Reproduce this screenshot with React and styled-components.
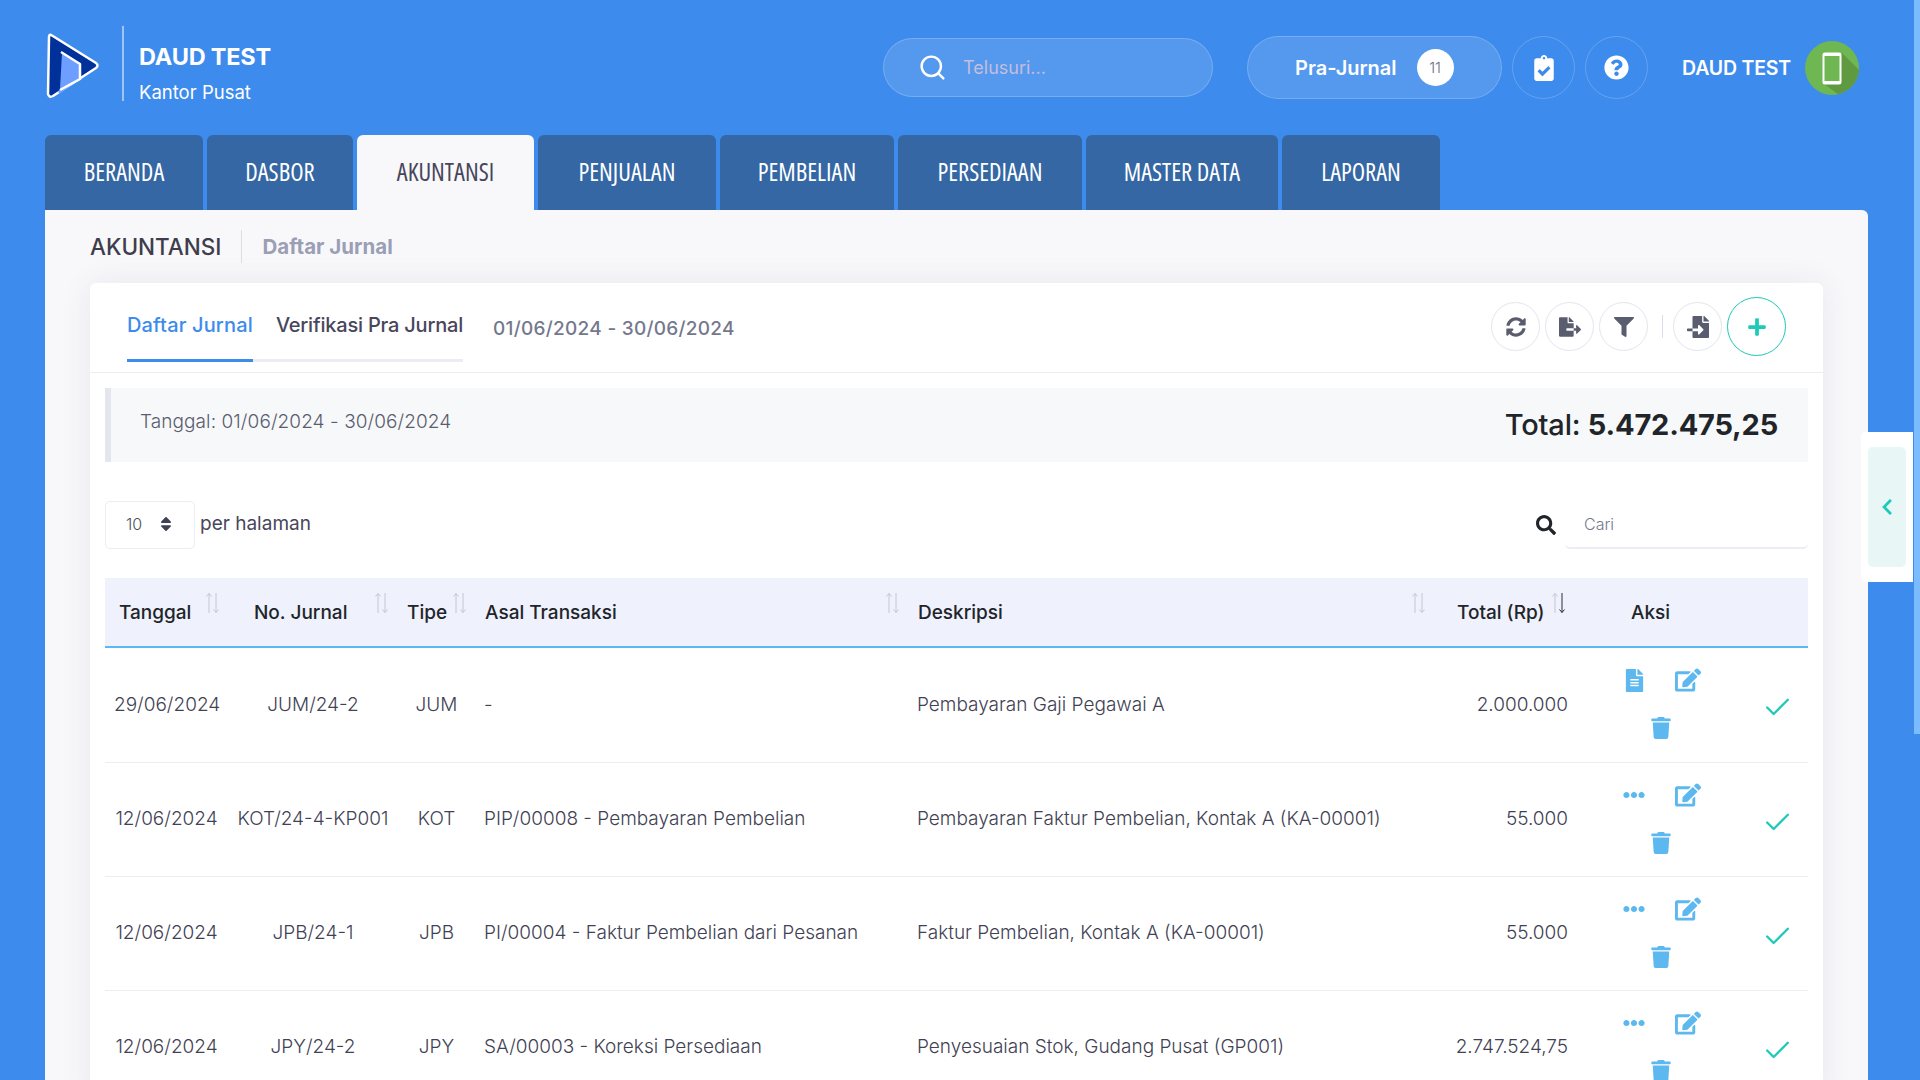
import React from "react";
import styled, { createGlobalStyle } from "styled-components";
import {
  FaSyncAlt,
  FaFileExport,
  FaFilter,
  FaFileImport,
  FaPlus,
  FaSearch,
  FaFileAlt,
  FaEdit,
  FaTrash,
  FaEllipsisH,
  FaChevronLeft,
  FaClipboardCheck,
  FaQuestionCircle,
  FaSort,
} from "react-icons/fa";
import { Search, Check } from "lucide-react";

const NAV = [
  { label: "BERANDA", width: 158 },
  { label: "DASBOR", width: 146 },
  { label: "AKUNTANSI", width: 177, active: true },
  { label: "PENJUALAN", width: 178 },
  { label: "PEMBELIAN", width: 174 },
  { label: "PERSEDIAAN", width: 184 },
  { label: "MASTER DATA", width: 192 },
  { label: "LAPORAN", width: 158 },
];

const COLUMNS = [
  { label: "Tanggal", width: 123, pad: 14, sort: 100, align: "center" },
  { label: "No. Jurnal", width: 170, pad: 26, sort: 146, align: "center" },
  { label: "Tipe", width: 77, pad: 9, sort: 54, align: "center" },
  { label: "Asal Transaksi", width: 433, pad: 10, sort: 410, align: "left" },
  { label: "Deskripsi", width: 537, pad: 10, sort: 503, align: "left" },
  { label: "Total (Rp)", width: 132, pad: 12, sort: 106, align: "right", sorted: true },
  { label: "Aksi", width: 231, pad: 54 },
];

const ROWS = [
  ["29/06/2024", "JUM/24-2", "JUM", "-", "Pembayaran Gaji Pegawai A", "2.000.000"],
  ["12/06/2024", "KOT/24-4-KP001", "KOT", "PIP/00008 - Pembayaran Pembelian", "Pembayaran Faktur Pembelian, Kontak A (KA-00001)", "55.000"],
  ["12/06/2024", "JPB/24-1", "JPB", "PI/00004 - Faktur Pembelian dari Pesanan", "Faktur Pembelian, Kontak A (KA-00001)", "55.000"],
  ["12/06/2024", "JPY/24-2", "JPY", "SA/00003 - Koreksi Persediaan", "Penyesuaian Stok, Gudang Pusat (GP001)", "2.747.524,75"],
];

const GlobalStyle = createGlobalStyle`
  html, body {
    margin: 0;
    height: 100%;
    overflow: hidden;
    background: #3d8bec;
    font-family: "Inter", "Noto Sans", sans-serif;
  }
`;

const Page = styled.div`
  height: 1080px;
  overflow: hidden;
  padding: 0 52px 0 45px;
  box-sizing: border-box;
`;

const Header = styled.header`
  display: flex;
  align-items: center;
  height: 135px;
  padding: 0 9px 0 1px;
`;

const LogoMark = styled.svg`
  margin-top: -3px;
`;

const Divider = styled.div`
  width: 2px;
  height: 75px;
  margin: -8px 0 0 22px;
  background: rgba(255, 255, 255, 0.5);
`;

const Brand = styled.div`
  margin: 12px 0 0 15px;
  color: #fff;
`;

const BrandName = styled.div`
  font-size: 23.500px;
  font-weight: 700;
  line-height: 26px;
  letter-spacing: -0.2px;
`;

const BrandOffice = styled.div`
  margin-top: 11px;
  font-size: 18.500px;
  line-height: 22px;
`;

const SearchPill = styled.div`
  display: flex;
  align-items: center;
  box-sizing: border-box;
  width: 330px;
  height: 59px;
  margin-left: auto;
  padding-left: 34px;
  border: 1px solid rgba(255, 255, 255, 0.2);
  border-radius: 30px;
  background: rgba(255, 255, 255, 0.12);
  color: #fff;
`;

const Placeholder = styled.span`
  margin-left: 16px;
  font-size: 18px;
  color: #c3bedd;
`;

const PraJurnal = styled.div`
  display: flex;
  align-items: center;
  box-sizing: border-box;
  width: 255px;
  height: 63px;
  margin-left: 34px;
  padding-left: 47px;
  border: 1px solid rgba(255, 255, 255, 0.2);
  border-radius: 32px;
  background: rgba(255, 255, 255, 0.12);
  color: #fff;
  font-size: 20px;
  font-weight: 600;
`;

const Badge = styled.span`
  display: flex;
  align-items: center;
  justify-content: center;
  width: 37px;
  height: 37px;
  margin-left: 20px;
  border-radius: 50%;
  background: #fff;
  color: #6c6e80;
  font-size: 15px;
  font-weight: 300;
`;

const HeaderIcon = styled.div`
  display: flex;
  align-items: center;
  justify-content: center;
  box-sizing: border-box;
  width: 63px;
  height: 63px;
  margin-left: 10px;
  border: 1px solid rgba(255, 255, 255, 0.2);
  border-radius: 50%;
  color: #fff;
`;

const UserName = styled.span`
  margin: 0 14px 0 34px;
  color: #fff;
  font-size: 19.500px;
  font-weight: 600;
  letter-spacing: -0.2px;
`;

const NavTabs = styled.nav`
  display: flex;
  gap: 4px;
  height: 75px;
`;

const NavTab = styled.div`
  display: flex;
  align-items: center;
  justify-content: center;
  box-sizing: border-box;
  width: ${(p) => p.$width}px;
  padding-bottom: 2px;
  border-radius: 6px 6px 0 0;
  background: ${(p) => (p.$active ? "#f8f8fb" : "#3467a3")};
  color: ${(p) => (p.$active ? "#48465b" : "#fff")};
  font-family: "Open Sans", "Noto Sans", sans-serif;
  font-stretch: 75%;
  font-size: 24.500px;
  font-weight: 500;
`;

const Panel = styled.main`
  padding: 0 45px;
  border-radius: 0 6px 0 0;
  background: #f8f8fb;
`;

const Breadcrumb = styled.div`
  display: flex;
  align-items: center;
  height: 73px;
`;

const CrumbTitle = styled.div`
  padding-right: 20px;
  border-right: 1px solid #dcdde6;
  color: #3f3d4b;
  font-size: 22.500px;
  font-weight: 500;
  line-height: 33px;
`;

const CrumbLink = styled.div`
  margin-left: 20px;
  color: #9a9fb5;
  font-size: 20.500px;
  font-weight: 700;
`;

const Card = styled.section`
  border-radius: 6px 6px 0 0;
  background: #fff;
  box-shadow: 0 0 30px rgba(82, 63, 105, 0.09);
`;

const CardHeader = styled.div`
  display: flex;
  align-items: flex-start;
  height: 89px;
  padding: 0 37px;
  border-bottom: 1px solid #ebedf2;
`;

const CardTab = styled.div`
  box-sizing: border-box;
  height: 59px;
  margin-top: 20px;
  padding: 10px 0 0 ${(p) => p.$indent || 0}px;
  border-bottom: 3px solid ${(p) => (p.$active ? "#3d8bec" : "#ebedf2")};
  color: ${(p) => (p.$active ? "#3d8bec" : "#48465b")};
  font-size: 20px;
  font-weight: 500;
  line-height: 24px;
  letter-spacing: ${(p) => (p.$active ? "0.15px" : "-0.2px")};
`;

const DateRange = styled.div`
  margin: 34px 0 0 30px;
  color: #74788d;
  font-size: 19px;
  font-weight: 500;
  line-height: 24px;
  letter-spacing: 0.27px;
`;

const Toolbar = styled.div`
  display: flex;
  align-items: center;
  gap: 5px;
  height: 59px;
  margin: 14px 0 0 auto;
`;

const ToolButton = styled.div`
  display: flex;
  align-items: center;
  justify-content: center;
  box-sizing: border-box;
  width: 49px;
  height: 49px;
  border: 1px solid #e4e5ee;
  border-radius: 50%;
  color: #595d6e;
`;

const AddButton = styled(ToolButton)`
  width: 59px;
  height: 59px;
  border-color: #1dc9b7;
  color: #1dc9b7;
`;

const ToolSep = styled.div`
  width: 1px;
  height: 23px;
  margin: 0 5px 0 9px;
  background: #dcdde6;
`;

const CardBody = styled.div`
  padding: 15px 15px 0;
`;

const Summary = styled.div`
  display: flex;
  align-items: center;
  justify-content: space-between;
  box-sizing: border-box;
  height: 74px;
  padding: 0 30px 0 29px;
  border-left: 6px solid #e4e5ee;
  background: #f7f8fa;
`;

const SummaryDate = styled.span`
  margin-top: -8px;
  color: #595d6e;
  font-size: 19px;
  font-weight: 300;
  letter-spacing: 0.08px;
`;

const SummaryTotal = styled.span`
  margin-top: -2px;
  color: #212529;
  font-size: 29px;
  font-weight: 500;
  letter-spacing: -0.2px;
`;

const Controls = styled.div`
  display: flex;
  align-items: center;
  height: 48px;
  margin-top: 39px;
`;

const PageSize = styled.div`
  display: flex;
  align-items: center;
  box-sizing: border-box;
  width: 90px;
  height: 48px;
  padding: 0 0 2px 20px;
  border: 1px solid #ebedf2;
  border-radius: 5px;
  color: #495057;
  font-size: 16px;
  font-weight: 300;
`;

const PageSizeArrow = styled.span`
  display: flex;
  margin-left: 15px;
  color: #3f4254;
`;

const PerPage = styled.span`
  margin: -4px 0 0 5px;
  color: #48465b;
  font-size: 19px;
  font-weight: 400;
`;

const FindIcon = styled.span`
  display: flex;
  margin-left: auto;
  color: #212529;
`;

const FindInput = styled.div`
  box-sizing: border-box;
  width: 243px;
  height: 48px;
  margin-left: 9px;
  padding: 13px 0 0 19px;
  border-bottom: 2px solid #ebedf2;
  border-radius: 0 0 5px 5px;
  color: #74788d;
  font-size: 16px;
  font-weight: 300;
`;

const Table = styled.table`
  width: 1703px;
  margin-top: 29px;
  border-collapse: collapse;
  table-layout: fixed;
`;

const HeadRow = styled.tr`
  height: 69px;
  background: #eff1fd;
  border-bottom: 2px solid #5cb8f0;
`;

const HeadCell = styled.th`
  position: relative;
  padding: 0 0 0 ${(p) => p.$pad}px;
  color: #212529;
  font-size: 19px;
  font-weight: 500;
  text-align: left;
  white-space: nowrap;
`;

const SortMark = styled.svg`
  position: absolute;
  top: 14px;
  left: ${(p) => p.$left}px;
`;

const BodyRow = styled.tr`
  height: 114px;
  border-bottom: 1px solid #ebedf2;
  &:first-child {
    height: 115px;
  }
`;

const BodyCell = styled.td`
  padding: 0 9px 1px;
  color: #3f4254;
  font-size: 19px;
  font-weight: 300;
  text-align: ${(p) => p.$align};
  white-space: nowrap;
  letter-spacing: 0;
`;

const ActionCell = styled.td`
  padding: 0 0 1px;
`;

const ActionRow = styled.div`
  display: flex;
  align-items: center;
`;

const ActionWrap = styled.div`
  display: flex;
  flex-wrap: wrap;
  justify-content: center;
  width: 110px;
  margin-left: 29px;
`;

const ActionIcon = styled.div`
  display: flex;
  align-items: center;
  justify-content: center;
  width: 54px;
  height: 48px;
  color: #5cb8ee;
`;

const DoneMark = styled.div`
  display: flex;
  margin: 7px 0 0 46px;
  color: #1dc9b7;
`;

const SideTab = styled.aside`
  position: fixed;
  top: 432px;
  right: 7px;
  box-sizing: border-box;
  width: 52px;
  height: 150px;
  padding: 15px 7px;
  border-radius: 5px 0 0 5px;
  background: #fff;
`;

const SideTabInner = styled.div`
  display: flex;
  align-items: center;
  justify-content: center;
  height: 100%;
  border-radius: 5px;
  background: #e8f7f6;
  color: #1dc9b7;
`;

const ScrollThumb = styled.div`
  position: fixed;
  top: 0;
  right: 0;
  width: 6px;
  height: 734px;
  background: #7abcff;
`;

const Logo = () => (
  <LogoMark width="54" height="68" viewBox="0 0 54 68">
    <path
      d="M3 5 Q3 1.500 6 3.500 L50 31 Q53 33.500 50 36 L7 64 Q3 66 2 62 Z"
      fill="#00309a"
      stroke="#fff"
      strokeWidth="2.500"
      strokeLinejoin="round"
    />
    <path d="M16 21 L34 33 V47 L16 60 Q10 63 14 57 Z" fill="#6e9eff" />
    <path d="M14 58 L34 47 V32 L15 20" fill="none" stroke="#fff" strokeWidth="2.500" strokeLinejoin="round" />
  </LogoMark>
);

const Avatar = () => (
  <svg width="54" height="54" viewBox="0 0 54 54">
    <circle cx="27" cy="27" r="27" fill="#6fb753" />
    <path d="M37 12 L54 29 A27 27 0 0 1 33 53.300 L18 42 Z" fill="#5f9a41" />
    <rect x="18.500" y="12.500" width="17" height="30" rx="1.500" fill="#6fb753" stroke="#fff" strokeWidth="2" />
    <rect x="18" y="12" width="18" height="3" fill="#fff" />
    <rect x="18" y="40" width="18" height="3" fill="#fff" />
  </svg>
);

const SortArrows = ({ left, sorted }) => (
  <SortMark $left={left} width="16" height="22" viewBox="0 0 16 22" fill="none" strokeWidth="1">
    <path d="M4 21 V1.500 M1.500 4.500 L4 1.500 L6.500 4.500" stroke="#c4c6d2" />
    <path
      d="M11 1 V20.500 M8.500 17.500 L11 20.500 L13.500 17.500"
      stroke={sorted ? "#2d2a45" : "#c4c6d2"}
    />
  </SortMark>
);

const App = () => {
  return (
    <Page>
      <GlobalStyle />
      <Header>
        <Logo />
        <Divider />
        <Brand>
          <BrandName>DAUD TEST</BrandName>
          <BrandOffice>Kantor Pusat</BrandOffice>
        </Brand>
        <SearchPill>
          <Search size={29} strokeWidth={2} />
          <Placeholder>Telusuri...</Placeholder>
        </SearchPill>
        <PraJurnal>
          Pra-Jurnal
          <Badge>11</Badge>
        </PraJurnal>
        <HeaderIcon>
          <FaClipboardCheck size={26} />
        </HeaderIcon>
        <HeaderIcon>
          <FaQuestionCircle size={25} />
        </HeaderIcon>
        <UserName>DAUD TEST</UserName>
        <Avatar />
      </Header>

      <NavTabs>
        {NAV.map((tab) => (
          <NavTab key={tab.label} $width={tab.width} $active={tab.active}>
            {tab.label}
          </NavTab>
        ))}
      </NavTabs>

      <Panel>
        <Breadcrumb>
          <CrumbTitle>AKUNTANSI</CrumbTitle>
          <CrumbLink>Daftar Jurnal</CrumbLink>
        </Breadcrumb>

        <Card>
          <CardHeader>
            <CardTab $active>Daftar Jurnal</CardTab>
            <CardTab $indent={23}>Verifikasi Pra Jurnal</CardTab>
            <DateRange>01/06/2024 - 30/06/2024</DateRange>
            <Toolbar>
              <ToolButton>
                <FaSyncAlt size={20} />
              </ToolButton>
              <ToolButton>
                <FaFileExport size={22} />
              </ToolButton>
              <ToolButton>
                <FaFilter size={20} />
              </ToolButton>
              <ToolSep />
              <ToolButton>
                <FaFileImport size={22} />
              </ToolButton>
              <AddButton>
                <FaPlus size={20} />
              </AddButton>
            </Toolbar>
          </CardHeader>

          <CardBody>
            <Summary>
              <SummaryDate>Tanggal: 01/06/2024 - 30/06/2024</SummaryDate>
              <SummaryTotal>
                Total: <b>5.472.475,25</b>
              </SummaryTotal>
            </Summary>

            <Controls>
              <PageSize>
                10
                <PageSizeArrow>
                  <FaSort size={18} />
                </PageSizeArrow>
              </PageSize>
              <PerPage>per halaman</PerPage>
              <FindIcon>
                <FaSearch size={20} />
              </FindIcon>
              <FindInput>Cari</FindInput>
            </Controls>

            <Table>
              <colgroup>
                {COLUMNS.map((col) => (
                  <col key={col.label} width={col.width} />
                ))}
              </colgroup>
              <thead>
                <HeadRow>
                  {COLUMNS.map((col) => (
                    <HeadCell key={col.label} $pad={col.pad}>
                      {col.label}
                      {col.sort && <SortArrows left={col.sort} sorted={col.sorted} />}
                    </HeadCell>
                  ))}
                </HeadRow>
              </thead>
              <tbody>
                {ROWS.map((row, i) => (
                  <BodyRow key={row[1]}>
                    {row.map((text, c) => (
                      <BodyCell key={c} $align={COLUMNS[c].align}>
                        {text}
                      </BodyCell>
                    ))}
                    <ActionCell>
                      <ActionRow>
                        <ActionWrap>
                          <ActionIcon>
                            {i === 0 ? <FaFileAlt size={23} /> : <FaEllipsisH size={22} />}
                          </ActionIcon>
                          <ActionIcon>
                            <FaEdit size={26} />
                          </ActionIcon>
                          <ActionIcon>
                            <FaTrash size={22} />
                          </ActionIcon>
                        </ActionWrap>
                        <DoneMark>
                          <Check size={31} strokeWidth={1.8} />
                        </DoneMark>
                      </ActionRow>
                    </ActionCell>
                  </BodyRow>
                ))}
              </tbody>
            </Table>
          </CardBody>
        </Card>
      </Panel>

      <SideTab>
        <SideTabInner>
          <FaChevronLeft size={18} />
        </SideTabInner>
      </SideTab>
      <ScrollThumb />
    </Page>
  );
};

export default App;
